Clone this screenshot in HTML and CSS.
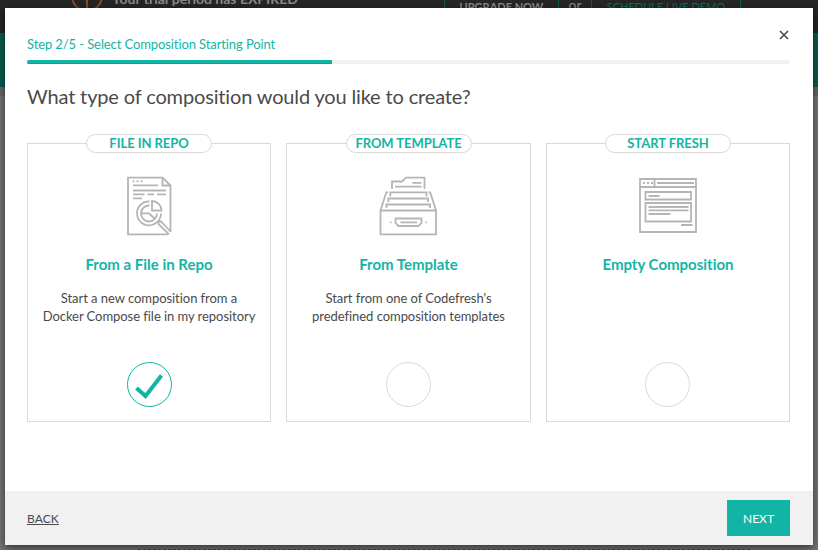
FILE: index.html
```
<!DOCTYPE html>
<html lang="en">
<head>
<meta charset="utf-8">
<title>Select Composition Starting Point</title>
<link rel="stylesheet" href="styles.css">
</head>
<body>
<div class="backdrop">
  <div class="trial">
    <svg class="alert" width="32" height="32" viewBox="0 0 32 32"><circle cx="16" cy="16" r="15"/><path d="M16 7v23"/></svg>
    <span class="trial-text">Your trial period has EXPIRED</span>
    <span class="trial-btn upgrade">UPGRADE NOW</span>
    <span class="or">or</span>
    <span class="trial-btn demo">SCHEDULE LIVE DEMO</span>
  </div>
  <div class="nav"></div>
  <div class="subnav"></div>
  <div class="canvas"><div class="dropzone"></div></div>
</div>
<main class="modal">
  <section class="content">
    <header class="top">
      <span class="step">Step 2/5 - Select Composition Starting Point</span>
      <svg class="close" width="10" height="10" viewBox="0 0 10 10"><path d="M1 1l8 8M9 1l-8 8"/></svg>
    </header>
    <div class="progress"><div class="bar"></div></div>
    <h1>What type of composition would you like to create?</h1>
    <div class="cards">
      <article class="card">
        <span class="tag">FILE IN REPO</span>
        <svg class="icon" width="60" height="60" viewBox="0 0 60 60">
          <path d="M49 58.300H9V1.700H43.500L51.500 9.500V56M43.500 2V9.500H51"/>
          <path d="M13.500 5.300h2M17.500 5.300h2M21.500 5.300h2M14 9.300H39M14 14.500H47M14 18.300H25.500M28.500 18.300H35M38 18.300H47M14 22.300H23"/>
          <path d="M30.500 25.300A12 12 0 1 0 42 37.500"/>
          <path d="M33 25V34.500H42.500A9.500 9.500 0 0 0 33 25Z"/>
          <path d="M30.500 29.500A8 8 0 1 0 38 37.500M22.500 37.300H30L35.500 42.500"/>
          <path d="M50 58.300L39.500 48V45.500H42L51.500 55.500"/>
        </svg>
        <h2>From a File in Repo</h2>
        <p>Start a new composition from a<br>Docker Compose file in my repository</p>
        <span class="check checked"><svg width="28" height="26" viewBox="0 0 28 26"><path d="M1.500 14L10.500 22L26.500 1.500"/></svg></span>
      </article>
      <article class="card">
        <span class="tag">FROM TEMPLATE</span>
        <svg class="icon drawer" width="60" height="60" viewBox="0 0 60 60">
          <path d="M2.500 34.500H58V58.300H2.500ZM2.500 34.500L8.300 16.300H10M58 34.500L52.200 16.300H50.500"/>
          <path d="M14 13V5.500H24L28 1.700H46.500V13M17 10.700H43.500M34.500 6.800H43.500"/>
          <path d="M12.300 20.500V16.300H48.500V20.500M10.300 26V22.500H50V26M8.500 32V28.500H52V32"/>
          <path d="M17.500 42.500H43.500V47L40.500 50H20.500L17.500 47ZM22.500 46.300H39M12 46.300h1.500M47.500 46.300h1.500"/>
        </svg>
        <h2>From Template</h2>
        <p>Start from one of Codefresh's<br>predefined composition templates</p>
        <span class="check"></span>
      </article>
      <article class="card">
        <span class="tag">START FRESH</span>
        <svg class="icon" width="60" height="60" viewBox="0 0 60 60">
          <path d="M2 3H58V56H2ZM2 11H58M16.500 3V11"/>
          <path d="M5 7h2M9 7h2M13 7h2M19 7H56"/>
          <path d="M7.500 16H53V23.500H7.500ZM10.500 20H21.500M7.500 27H53V45.500H7.500ZM10.500 31H50.500M10.500 34.300H50.500M10.500 38H32.500M43 49H54.500"/>
        </svg>
        <h2>Empty Composition</h2>
        <p></p>
        <span class="check shifted"></span>
      </article>
    </div>
  </section>
  <footer class="footer"><a class="back">BACK</a><button class="next">NEXT</button></footer>
</main>
</body>
</html>
```
FILE: styles.css
```
* { box-sizing: border-box; }
body {
  margin: 0;
  width: 818px;
  height: 550px;
  overflow: hidden;
  background: #777;
  color: #4a4a4a;
  font-family: Lato, sans-serif;
  display: grid;
}
.backdrop, .modal { grid-area: 1 / 1; }
.backdrop { display: flex; flex-direction: column; height: 550px; overflow: hidden; }
.trial {
  height: 33px;
  background: #262626;
  display: flex;
  align-items: flex-start;
  padding-left: 71px;
  color: #8b8b8b;
  white-space: nowrap;
}
.alert { margin-top: -20px; fill: none; stroke: #8b4a2c; stroke-width: 2; flex: none; }
.trial-text { margin: -10px 0 0 9px; font-size: 14px; line-height: 18px; font-weight: 700; width: 332px; }
.trial-btn { height: 28px; margin-top: -12px; border: 1px solid #0a5f54; line-height: 36px; text-align: center; }
.upgrade { width: 115px; font-size: 11px; font-weight: 700; }
.or { width: 32px; text-align: center; font-size: 14px; line-height: 18px; margin-top: -4px; }
.demo { width: 150px; color: #0a6f62; font-size: 11px; }
.nav { height: 54px; background: #0a5d51; }
.subnav { height: 9px; background: #696969; }
.canvas { flex: 1; background: #777; padding: 453px 68px 0 138px; }
.dropzone { border-top: 1px dashed #444; }
.modal {
  width: 808px;
  height: 537px;
  margin: 8px 0 0 5px;
  background: #fff;
  box-shadow: 0 3px 9px rgba(0, 0, 0, .6);
  display: flex;
  flex-direction: column;
}
.content { flex: 1; padding: 0 23px 0 22px; }
.top { height: 52px; display: flex; justify-content: space-between; }
.step { margin-top: 28px; font-size: 13px; line-height: 16px; letter-spacing: -.1px; color: #12b5a5; }
.close { margin: 22px 1px 0 0; fill: none; stroke: #4a4a4a; stroke-width: 1.600; }
.progress { height: 4px; border-radius: 2px; background: #f1f1f1; overflow: hidden; }
.bar { width: 305px; height: 4px; background: #12b5a5; border-bottom: 1px solid #0fa092; }
h1 { margin: 20px 0 35px; font-size: 20px; line-height: 24px; font-weight: 400; letter-spacing: -.15px; }
.cards { display: grid; grid-template-columns: 244px 245px 244px; column-gap: 15px; }
.card {
  height: 279px;
  border: 1px solid #dadada;
  display: flex;
  flex-direction: column;
  align-items: center;
}
.tag {
  width: 126px;
  height: 19px;
  margin-top: -10px;
  border: 1px solid #dadada;
  border-radius: 10px;
  background: #fff;
  color: #12b5a5;
  font-size: 13px;
  line-height: 17px;
  font-weight: 700;
  letter-spacing: -.06px;
  text-align: center;
}
.icon { margin-top: 23px; fill: none; stroke: #b5b5b5; stroke-width: 1.800; }
.drawer { margin-right: 1px; }
h2 { margin: 18px 0 0; font-size: 15px; line-height: 20px; font-weight: 700; font-variant-ligatures: none; color: #12b5a5; }
p { margin: 15px 0 0; height: 36px; font-size: 13px; line-height: 18px; letter-spacing: -.05px; text-align: center; white-space: nowrap; }
.check {
  width: 45px;
  height: 45px;
  margin-top: 37px;
  border: 1px solid #dadada;
  border-radius: 50%;
}
.shifted { margin-right: 1px; }
.checked { border-color: #12b5a5; padding: 11px 0 0 7px; line-height: 0; }
.checked svg { fill: none; stroke: #12b5a5; stroke-width: 4; }
.footer {
  height: 54px;
  padding: 0 23px 0 22px;
  background: #f1f1f1;
  display: flex;
  align-items: center;
  justify-content: space-between;
}
.back { font-size: 12px; letter-spacing: .1px; text-decoration: underline; }
.next {
  width: 63px;
  height: 36px;
  padding: 1px 0 0;
  border: 0;
  background: #12b5a5;
  color: #fff;
  font: 12px Lato, sans-serif;
}
```
